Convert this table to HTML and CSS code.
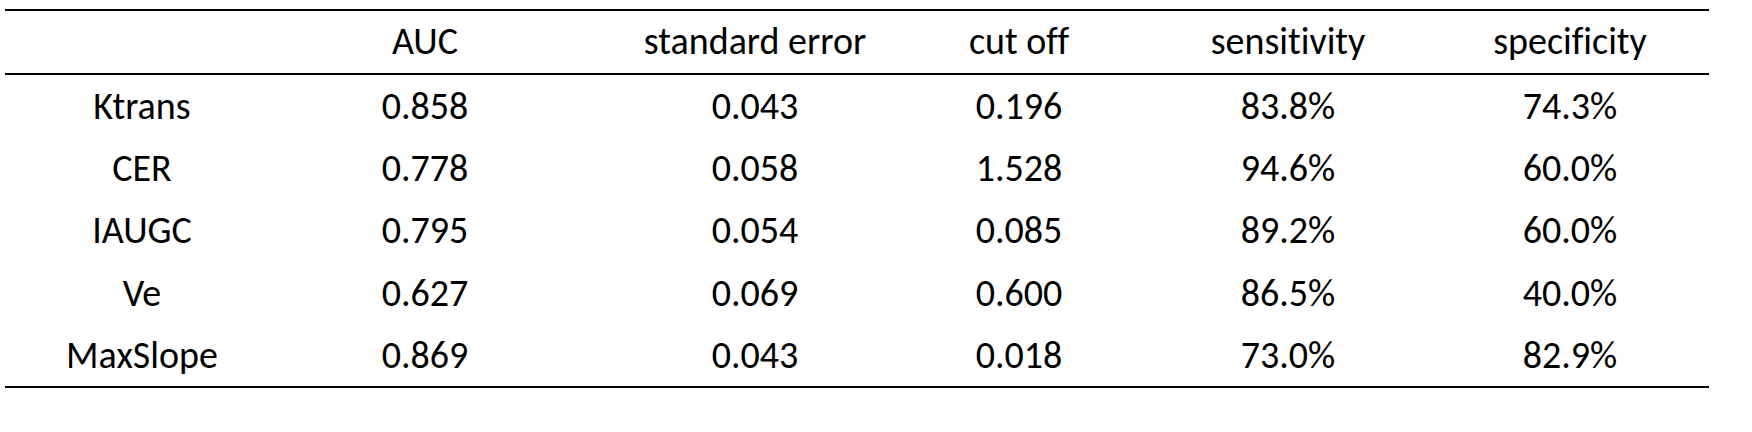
FILE: index.html
```html
<!DOCTYPE html>
<html lang="en">
<head>
  <meta charset="UTF-8">
  <meta name="viewport" content="width=device-width, initial-scale=1.0">
  <title>ROC analysis</title>
  <link rel="stylesheet" href="styles.css">
</head>
<body>
  <table class="roc-table">
    <colgroup>
      <col class="col-name">
      <col class="col-auc">
      <col class="col-se">
      <col class="col-cut">
      <col class="col-sens">
      <col class="col-spec">
    </colgroup>
    <thead>
      <tr>
        <th></th>
        <th>AUC</th>
        <th>standard error</th>
        <th>cut off</th>
        <th>sensitivity</th>
        <th>specificity</th>
      </tr>
    </thead>
    <tbody>
      <tr>
        <td>Ktrans</td>
        <td>0.858</td>
        <td>0.043</td>
        <td>0.196</td>
        <td>83.8%</td>
        <td>74.3%</td>
      </tr>
      <tr>
        <td>CER</td>
        <td>0.778</td>
        <td>0.058</td>
        <td>1.528</td>
        <td>94.6%</td>
        <td>60.0%</td>
      </tr>
      <tr>
        <td>IAUGC</td>
        <td>0.795</td>
        <td>0.054</td>
        <td>0.085</td>
        <td>89.2%</td>
        <td>60.0%</td>
      </tr>
      <tr>
        <td>Ve</td>
        <td>0.627</td>
        <td>0.069</td>
        <td>0.600</td>
        <td>86.5%</td>
        <td>40.0%</td>
      </tr>
      <tr>
        <td>MaxSlope</td>
        <td>0.869</td>
        <td>0.043</td>
        <td>0.018</td>
        <td>73.0%</td>
        <td>82.9%</td>
      </tr>
    </tbody>
  </table>
</body>
</html>
```

FILE: styles.css
```css
body {
  margin: 9px 0 0 5px;
  background: #fff;
  color: #000;
  font-family: Carlito, Calibri, Lato, sans-serif;
}

.roc-table {
  width: 1704px;
  border-collapse: collapse;
  table-layout: fixed;
  border-top: 2px solid #000;
  border-bottom: 2px solid #000;
  font-size: 38px;
  font-variant-ligatures: none;
}

.col-name { width: 274px; }
.col-auc { width: 292px; }
.col-se { width: 368px; }
.col-cut { width: 160px; }
.col-sens { width: 378px; }
.col-spec { width: 232px; }

.roc-table th,
.roc-table td {
  padding: 0;
  text-align: center;
  font-weight: normal;
  white-space: nowrap;
}

.roc-table th:last-child,
.roc-table td:last-child {
  padding-right: 46px;
}

.roc-table thead tr {
  height: 64px;
  border-bottom: 2px solid #000;
}

.roc-table thead th {
  padding-bottom: 3px;
}

.roc-table tbody tr {
  height: 62.6px;
}
```
